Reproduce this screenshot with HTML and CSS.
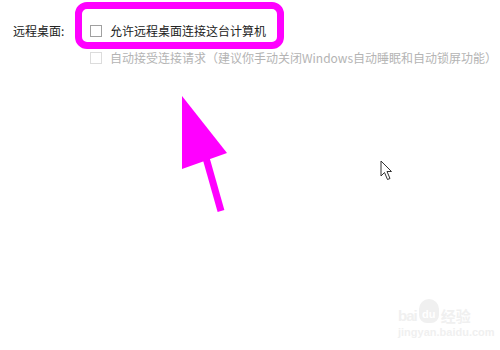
FILE: index.html
```html
<!DOCTYPE html>
<html>

<head>
  <title>远程桌面</title>
  <link rel="stylesheet" href="styles.css">
</head>

<body>
  <div id="page">
    <div class="setting">
      <div class="setting-label">远程桌面:</div>
      <div class="options">
        <label class="option">
          <span class="box"></span>
          <span>允许远程桌面连接这台计算机</span>
        </label>
        <label class="option disabled">
          <span class="box"></span>
          <span>自动接受连接请求（建议你手动关闭Windows自动睡眠和自动锁屏功能）</span>
        </label>
      </div>
    </div>

    <!-- magenta highlight around the first option -->
    <div class="highlight"></div>

    <!-- pointing arrow drawn over the page -->
    <svg class="arrow" width="500" height="350" viewBox="0 0 500 350">
      <polygon points="182,96 182,169 227,153" fill="#ff00ff" />
      <line x1="206" y1="158" x2="221" y2="211" stroke="#ff00ff" stroke-width="7" />
    </svg>

    <svg class="cursor" width="14" height="21" viewBox="0 0 14 21">
      <path d="M1 1 L1 16 L4.5 12.5 L7.5 19.5 L10 18.5 L7 11.5 L11.5 11.5 Z" fill="#fff" stroke="#333" stroke-width="1" stroke-linejoin="round" />
    </svg>

    <div class="watermark">
      <div class="wm-top">
        <span class="wm-bai">bai</span>
        <span class="wm-paw">du</span>
        <span class="wm-jy">经验</span>
      </div>
      <div class="wm-url">jingyan.baidu.com</div>
    </div>
  </div>
</body>

</html>
```

FILE: styles.css
```css
body,
html {
  margin: 0;
  padding: 0;
  background: #fff;
}

#page {
  position: relative;
  width: 500px;
  height: 350px;
  overflow: hidden;
  font-family: "Noto Sans CJK SC", "Noto Sans", sans-serif;
  font-size: 12px;
  color: #222;
}

.setting {
  display: flex;
  padding: 23px 0 0 13px;
}

.setting-label {
  flex: none;
  width: 77px;
  line-height: 16px;
}

.options {
  flex: none;
  display: flex;
  flex-direction: column;
  gap: 11px;
}

.option {
  display: flex;
  align-items: center;
  height: 16px;
  line-height: 16px;
  white-space: nowrap;
}

.box {
  flex: none;
  width: 10px;
  height: 10px;
  border: 1px solid #a0a0a0;
  margin-right: 8px;
  background: #fff;
}

.option.disabled {
  color: #b4b4b4;
}

.option.disabled .box {
  border-color: #dcdcdc;
}

.highlight {
  position: absolute;
  left: 75px;
  top: 2px;
  width: 209px;
  height: 47px;
  box-sizing: border-box;
  border: 7px solid #ff00ff;
  border-radius: 12px;
}

.arrow {
  position: absolute;
  left: 0;
  top: 0;
  pointer-events: none;
}

.cursor {
  position: absolute;
  left: 380px;
  top: 160px;
}

.watermark {
  position: absolute;
  left: 398px;
  top: 296px;
  color: #f0f0f0;
  font-family: "Liberation Sans", sans-serif;
  font-weight: bold;
}

.wm-top {
  display: flex;
  align-items: flex-end;
  height: 27px;
}

.wm-bai {
  font-size: 15px;
  line-height: 15px;
  letter-spacing: -1px;
}

.wm-paw {
  display: flex;
  align-items: flex-end;
  justify-content: center;
  width: 20px;
  height: 24px;
  margin: 0 2px;
  border: 2px solid #f0f0f0;
  border-radius: 10px 10px 8px 8px;
  color: #fff;
  background: #f0f0f0;
  font-size: 11px;
  line-height: 13px;
  box-sizing: border-box;
}

.wm-jy {
  font-family: "Noto Sans CJK SC", sans-serif;
  font-size: 15px;
  line-height: 15px;
}

.wm-url {
  font-size: 11px;
  line-height: 14px;
  margin-top: 2px;
}
```
